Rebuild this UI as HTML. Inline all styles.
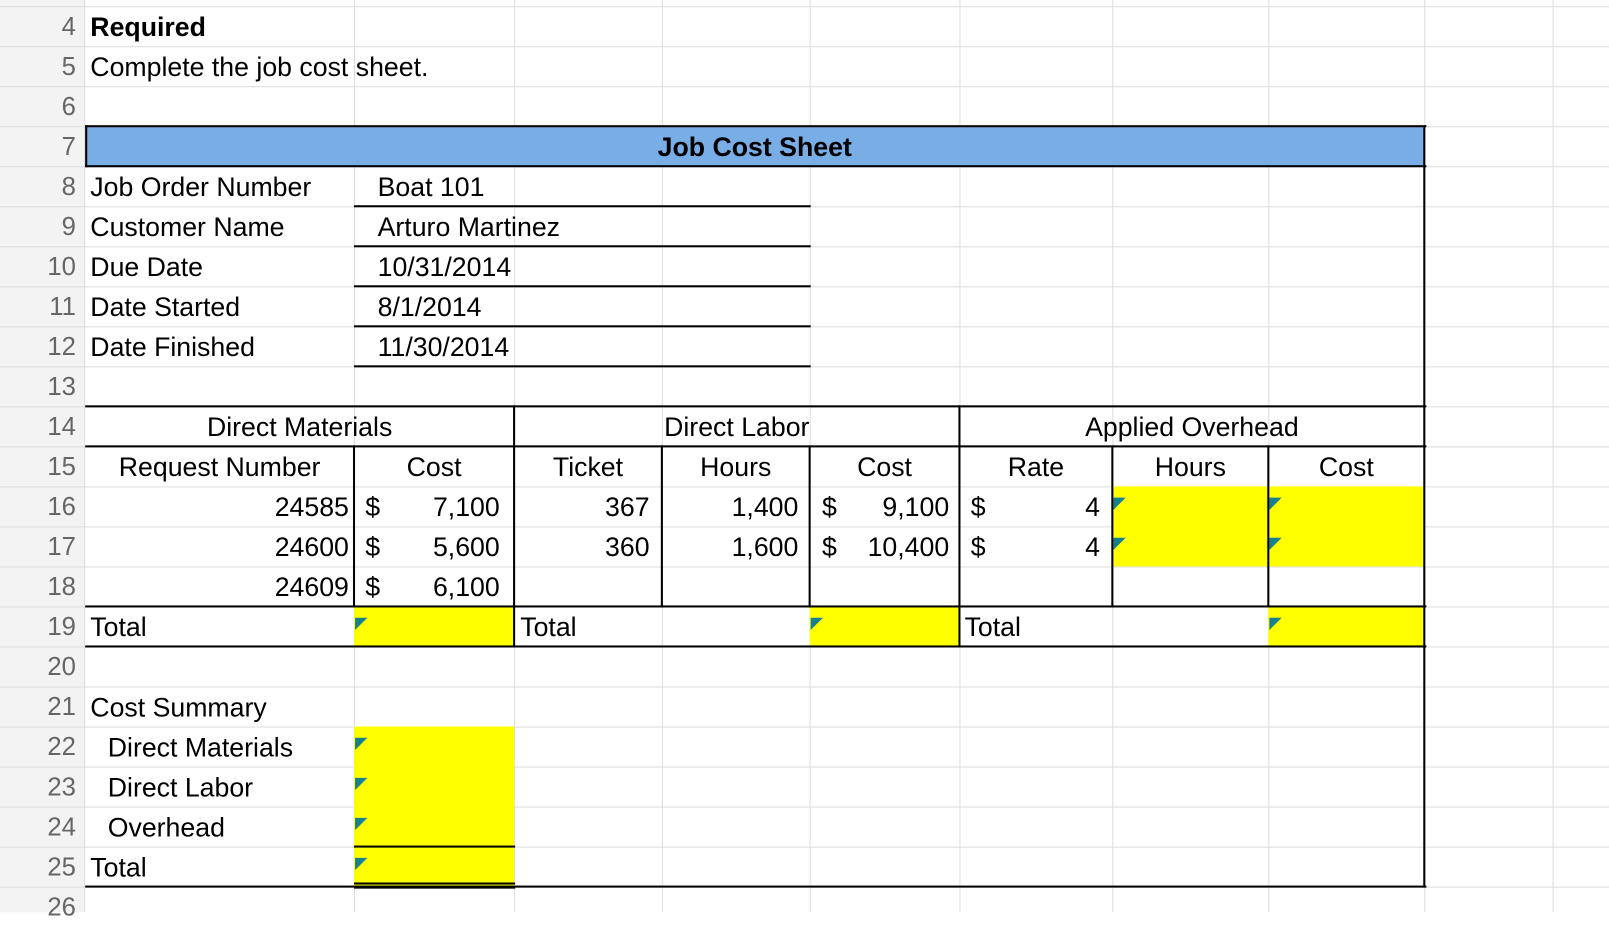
<!DOCTYPE html>
<html><head><meta charset="utf-8"><style>
html,body{margin:0;padding:0;background:#fff;overflow:hidden;width:1609px;height:912px}
#w{position:absolute;left:0;top:0;width:1568px;height:889px;transform:scale(1.02615);transform-origin:0 0;font-family:"Liberation Sans",Arial,sans-serif;font-size:26px;color:#000}
#w div{position:absolute;box-sizing:border-box}
.h{height:1px;background:#dcdcdc}
.v{width:1px;background:#dcdcdc}
.bh{height:2px;background:#000}
.bv{width:2px;background:#000}
.t{height:39px;line-height:41px;white-space:nowrap}
.n{color:#666;width:74px;text-align:right;left:0;font-size:25px}
.y{background:#ffff00}
.tri{width:0;height:0;border-top:12px solid #17808f;border-right:12px solid transparent}
</style></head><body><div id="w">
<div style="left:0;top:0;width:82px;height:889px;background:#f3f3f3"></div>
<div class="h" style="left:0;top:6px;width:1568px"></div>
<div class="h" style="left:0;top:45px;width:1568px"></div>
<div class="h" style="left:0;top:84px;width:1568px"></div>
<div class="h" style="left:0;top:123px;width:1568px"></div>
<div class="h" style="left:0;top:162px;width:1568px"></div>
<div class="h" style="left:0;top:201px;width:1568px"></div>
<div class="h" style="left:0;top:240px;width:1568px"></div>
<div class="h" style="left:0;top:279px;width:1568px"></div>
<div class="h" style="left:0;top:318px;width:1568px"></div>
<div class="h" style="left:0;top:357px;width:1568px"></div>
<div class="h" style="left:0;top:396px;width:1568px"></div>
<div class="h" style="left:0;top:435px;width:1568px"></div>
<div class="h" style="left:0;top:474px;width:1568px"></div>
<div class="h" style="left:0;top:513px;width:1568px"></div>
<div class="h" style="left:0;top:552px;width:1568px"></div>
<div class="h" style="left:0;top:591px;width:1568px"></div>
<div class="h" style="left:0;top:630px;width:1568px"></div>
<div class="h" style="left:0;top:669px;width:1568px"></div>
<div class="h" style="left:0;top:708px;width:1568px"></div>
<div class="h" style="left:0;top:747px;width:1568px"></div>
<div class="h" style="left:0;top:786px;width:1568px"></div>
<div class="h" style="left:0;top:825px;width:1568px"></div>
<div class="h" style="left:0;top:864px;width:1568px"></div>
<div class="v" style="left:82px;top:0;height:889px"></div>
<div class="v" style="left:345px;top:0;height:889px"></div>
<div class="v" style="left:501px;top:0;height:889px"></div>
<div class="v" style="left:645px;top:0;height:889px"></div>
<div class="v" style="left:789px;top:0;height:889px"></div>
<div class="v" style="left:935px;top:0;height:889px"></div>
<div class="v" style="left:1084px;top:0;height:889px"></div>
<div class="v" style="left:1236px;top:0;height:889px"></div>
<div class="v" style="left:1388px;top:0;height:889px"></div>
<div class="v" style="left:1513px;top:0;height:889px"></div>
<div style="left:83px;top:123px;width:1305px;height:39px;background:#79ade5"></div>
<div class="y" style="left:1084px;top:474px;width:304px;height:78px"></div>
<div class="y" style="left:345px;top:591px;width:156px;height:39px"></div>
<div class="y" style="left:789px;top:591px;width:146px;height:39px"></div>
<div class="y" style="left:1236px;top:591px;width:152px;height:39px"></div>
<div class="y" style="left:345px;top:708px;width:156px;height:156px"></div>
<div class="tri" style="left:1085px;top:485px"></div>
<div class="tri" style="left:1237px;top:485px"></div>
<div class="tri" style="left:1085px;top:524px"></div>
<div class="tri" style="left:1237px;top:524px"></div>
<div class="tri" style="left:346px;top:602px"></div>
<div class="tri" style="left:790px;top:602px"></div>
<div class="tri" style="left:1237px;top:602px"></div>
<div class="tri" style="left:346px;top:719px"></div>
<div class="tri" style="left:346px;top:758px"></div>
<div class="tri" style="left:346px;top:797px"></div>
<div class="tri" style="left:346px;top:836px"></div>
<div class="bh" style="left:83px;top:122px;width:1307px"></div>
<div class="bh" style="left:83px;top:161px;width:1307px"></div>
<div class="bh" style="left:83px;top:395px;width:1307px"></div>
<div class="bh" style="left:83px;top:434px;width:1307px"></div>
<div class="bh" style="left:83px;top:590px;width:1307px"></div>
<div class="bh" style="left:83px;top:629px;width:1307px"></div>
<div class="bh" style="left:83px;top:863px;width:1307px"></div>
<div class="bv" style="left:1387px;top:122px;height:743px"></div>
<div class="bv" style="left:83px;top:122px;height:41px"></div>
<div class="bh" style="left:345px;top:200px;width:445px"></div>
<div class="bh" style="left:345px;top:239px;width:445px"></div>
<div class="bh" style="left:345px;top:278px;width:445px"></div>
<div class="bh" style="left:345px;top:317px;width:445px"></div>
<div class="bh" style="left:345px;top:356px;width:445px"></div>
<div class="bv" style="left:500px;top:395px;height:236px"></div>
<div class="bv" style="left:934px;top:395px;height:236px"></div>
<div class="bv" style="left:344px;top:434px;height:158px"></div>
<div class="bv" style="left:644px;top:434px;height:158px"></div>
<div class="bv" style="left:788px;top:434px;height:158px"></div>
<div class="bv" style="left:1083px;top:434px;height:158px"></div>
<div class="bv" style="left:1235px;top:434px;height:158px"></div>
<div class="bh" style="left:345px;top:824px;width:157px"></div>
<div class="bh" style="left:345px;top:860px;width:157px"></div>
<div class="bh" style="left:345px;top:864px;width:157px"></div>
<div class="t n" style="top:6px">4</div>
<div class="t n" style="top:45px">5</div>
<div class="t n" style="top:84px">6</div>
<div class="t n" style="top:123px">7</div>
<div class="t n" style="top:162px">8</div>
<div class="t n" style="top:201px">9</div>
<div class="t n" style="top:240px">10</div>
<div class="t n" style="top:279px">11</div>
<div class="t n" style="top:318px">12</div>
<div class="t n" style="top:357px">13</div>
<div class="t n" style="top:396px">14</div>
<div class="t n" style="top:435px">15</div>
<div class="t n" style="top:474px">16</div>
<div class="t n" style="top:513px">17</div>
<div class="t n" style="top:552px">18</div>
<div class="t n" style="top:591px">19</div>
<div class="t n" style="top:630px">20</div>
<div class="t n" style="top:669px">21</div>
<div class="t n" style="top:708px">22</div>
<div class="t n" style="top:747px">23</div>
<div class="t n" style="top:786px">24</div>
<div class="t n" style="top:825px">25</div>
<div class="t n" style="top:864px">26</div>
<div class="t" style="left:88px;top:6px;font-weight:bold">Required</div>
<div class="t" style="left:88px;top:45px">Complete the job cost sheet.</div>
<div class="t" style="left:83px;top:123px;width:1305px;text-align:center;font-weight:bold">Job Cost Sheet</div>
<div class="t" style="left:88px;top:162px">Job Order Number</div>
<div class="t" style="left:88px;top:201px">Customer Name</div>
<div class="t" style="left:88px;top:240px">Due Date</div>
<div class="t" style="left:88px;top:279px">Date Started</div>
<div class="t" style="left:88px;top:318px">Date Finished</div>
<div class="t" style="left:368px;top:162px">Boat 101</div>
<div class="t" style="left:368px;top:201px">Arturo Martinez</div>
<div class="t" style="left:368px;top:240px">10/31/2014</div>
<div class="t" style="left:368px;top:279px">8/1/2014</div>
<div class="t" style="left:368px;top:318px">11/30/2014</div>
<div class="t" style="left:83px;top:396px;width:418px;text-align:center">Direct Materials</div>
<div class="t" style="left:501px;top:396px;width:434px;text-align:center">Direct Labor</div>
<div class="t" style="left:935px;top:396px;width:453px;text-align:center">Applied Overhead</div>
<div class="t" style="left:83px;top:435px;width:262px;text-align:center">Request Number</div>
<div class="t" style="left:345px;top:435px;width:156px;text-align:center">Cost</div>
<div class="t" style="left:501px;top:435px;width:144px;text-align:center">Ticket</div>
<div class="t" style="left:645px;top:435px;width:144px;text-align:center">Hours</div>
<div class="t" style="left:789px;top:435px;width:146px;text-align:center">Cost</div>
<div class="t" style="left:935px;top:435px;width:149px;text-align:center">Rate</div>
<div class="t" style="left:1084px;top:435px;width:152px;text-align:center">Hours</div>
<div class="t" style="left:1236px;top:435px;width:152px;text-align:center">Cost</div>
<div class="t" style="left:83px;top:474px;width:257px;text-align:right">24585</div>
<div class="t" style="left:83px;top:513px;width:257px;text-align:right">24600</div>
<div class="t" style="left:83px;top:552px;width:257px;text-align:right">24609</div>
<div class="t" style="left:356px;top:474px">$</div>
<div class="t" style="left:356px;top:513px">$</div>
<div class="t" style="left:356px;top:552px">$</div>
<div class="t" style="left:345px;top:474px;width:142px;text-align:right">7,100</div>
<div class="t" style="left:345px;top:513px;width:142px;text-align:right">5,600</div>
<div class="t" style="left:345px;top:552px;width:142px;text-align:right">6,100</div>
<div class="t" style="left:501px;top:474px;width:132px;text-align:right">367</div>
<div class="t" style="left:501px;top:513px;width:132px;text-align:right">360</div>
<div class="t" style="left:645px;top:474px;width:133px;text-align:right">1,400</div>
<div class="t" style="left:645px;top:513px;width:133px;text-align:right">1,600</div>
<div class="t" style="left:801px;top:474px">$</div>
<div class="t" style="left:801px;top:513px">$</div>
<div class="t" style="left:789px;top:474px;width:136px;text-align:right">9,100</div>
<div class="t" style="left:789px;top:513px;width:136px;text-align:right">10,400</div>
<div class="t" style="left:946px;top:474px">$</div>
<div class="t" style="left:946px;top:513px">$</div>
<div class="t" style="left:935px;top:474px;width:137px;text-align:right">4</div>
<div class="t" style="left:935px;top:513px;width:137px;text-align:right">4</div>
<div class="t" style="left:88px;top:591px">Total</div>
<div class="t" style="left:507px;top:591px">Total</div>
<div class="t" style="left:940px;top:591px">Total</div>
<div class="t" style="left:88px;top:669px">Cost Summary</div>
<div class="t" style="left:105px;top:708px">Direct Materials</div>
<div class="t" style="left:105px;top:747px">Direct Labor</div>
<div class="t" style="left:105px;top:786px">Overhead</div>
<div class="t" style="left:88px;top:825px">Total</div>
</div></body></html>
